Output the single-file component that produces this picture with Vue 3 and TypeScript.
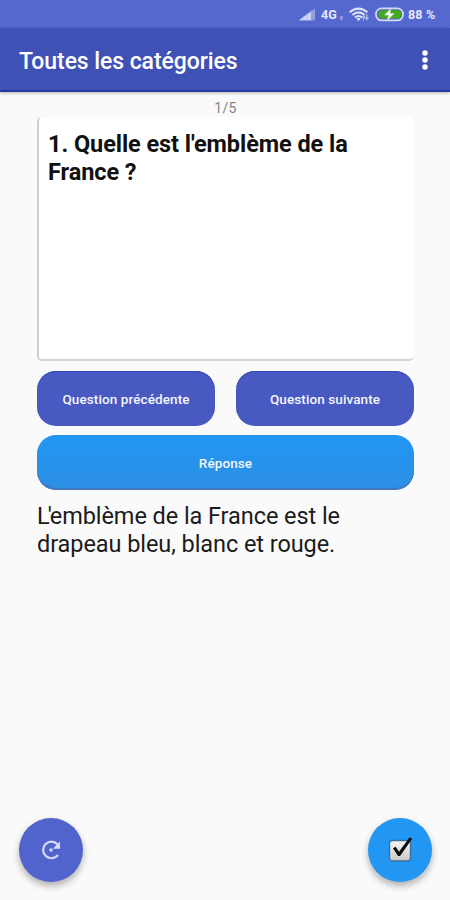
<script setup lang="ts">
import { ref } from 'vue'

interface Card {
  question: string
  answer: string
}

const total = 5
const index = ref<number>(0)
const showAnswer = ref<boolean>(true)
const cards: Card[] = [
  {
    question: "Quelle est l'emblème de la France ?",
    answer: "L'emblème de la France est le drapeau bleu, blanc et rouge.",
  },
]

function step(delta: number): void {
  index.value = Math.min(cards.length - 1, Math.max(0, index.value + delta))
}
</script>

<template>
  <div class="screen">
    <div class="status">
      <svg class="signal" width="17" height="13" viewBox="0 0 17 13">
        <path d="M0 12.2 16 .6V12.2Z" fill="#929fe2" />
        <path d="M0 12.2 12 3.5V12.2Z" fill="#d3d8f5" />
        <path d="M4.4 7.5V13M8.2 5V13M12 2V13" stroke="#a3aee6" stroke-width=".6" />
      </svg>
      <span class="net">4G</span>
      <span class="dot"></span>
      <svg class="wifi" width="21" height="15" viewBox="0 0 21 15">
        <g fill="none" stroke="#dfe3fa" stroke-width="2">
          <path d="M.6 5.200Q9.500-2 18.400 5.200" />
          <path d="M3.400 8Q9.500 2.800 15.600 8" />
          <path d="M6 10.600Q9.500 7.300 13 10.600" />
        </g>
        <path d="M7.300 11.600Q9.500 9.800 11.700 11.600L9.500 14.200Z" fill="#dfe3fa" />
        <path d="M14.500 13.500V9M13 10.500 14.500 8.700 16 10.500M17.800 7V12M16.300 10.500 17.800 12.300 19.300 10.500" fill="none" stroke="#b3bdec" stroke-width="1.200" />
      </svg>
      <svg class="battery" width="29" height="15" viewBox="0 0 29 15">
        <rect x="1" y="1.400" width="27" height="12" rx="5.500" fill="#5968bb" stroke="#d4daf4" stroke-width="1.700" />
        <path d="M7 3.300H23.500Q26 3.300 26 7.400T23.500 11.500H7Q3.500 11.500 3.500 7.400T7 3.300Z" fill="#43a91e" />
        <path d="M15.800 1.700 9.600 8H13.500L12.500 13.300 19 6.500H15Z" fill="#fff" stroke="#c4e6ce" stroke-width=".6" />
      </svg>
      <span class="pct">88 %</span>
    </div>

    <header class="bar">
      <h1>Toutes les catégories</h1>
      <svg class="more" width="8" height="22" viewBox="0 0 8 22">
        <circle cx="4" cy="4" r="2.700" />
        <circle cx="4" cy="11" r="2.700" />
        <circle cx="4" cy="18" r="2.700" />
      </svg>
    </header>

    <main>
      <div class="counter">{{ index + 1 }}/{{ total }}</div>
      <section class="card">{{ index + 1 }}. {{ cards[index].question }}</section>
      <div class="nav">
        <button class="btn" @click="step(-1)">Question précédente</button>
        <button class="btn next" @click="step(1)">Question suivante</button>
      </div>
      <button class="btn reveal" @click="showAnswer = !showAnswer">Réponse</button>
      <p v-if="showAnswer" class="answer">{{ cards[index].answer }}</p>
    </main>

    <footer>
      <button class="fab" aria-label="Recommencer">
        <svg width="22" height="22" viewBox="0 0 22 22">
          <path d="M17.600 5.400A8.300 8.300 0 1 0 18 16" fill="none" stroke="#d2d9fa" stroke-width="2.200" />
          <path d="M20 2.500V9.700H12.800Z" fill="#d2d9fa" />
          <circle cx="11" cy="11" r="1.700" fill="#d2d9fa" />
        </svg>
      </button>
      <button class="fab valid" aria-label="Valider">
        <svg width="26" height="28" viewBox="0 0 26 28">
          <defs>
            <linearGradient id="box" x1="0" y1="0" x2="0" y2="1">
              <stop offset="0" stop-color="#f5f5f5" />
              <stop offset="1" stop-color="#c6c7c8" />
            </linearGradient>
          </defs>
          <rect x="2.500" y="4.500" width="21" height="20.500" rx="3" fill="url(#box)" stroke="#3d6f9b" stroke-width="1.300" />
          <path d="M6 12.200 8.600 10.700 12 15.800 22.500 1.500 25.200 2.800 13 20H11Z" fill="#0b0b0b" />
        </svg>
      </button>
    </footer>
  </div>
</template>

<style>
body {
  margin: 0;
}
</style>

<style scoped>
.screen {
  width: 450px;
  height: 900px;
  display: flex;
  flex-direction: column;
  background: #fafafa;
  font-family: Roboto, 'Liberation Sans', sans-serif;
  overflow: hidden;
}
.status {
  height: 28px;
  box-sizing: border-box;
  padding: 1px 0 0 299px;
  display: flex;
  align-items: center;
  flex: none;
  background: #5468cf;
  color: #e4e8fc;
}
.net {
  margin-left: 5px;
  width: 17px;
  font-size: 12.5px;
  font-weight: 700;
}
.dot {
  width: 3px;
  height: 4px;
  margin: 6px 6px 0 2px;
  background: #8b98df;
}
.battery {
  margin-left: 5px;
}
.pct {
  margin-left: 4px;
  font-size: 12.5px;
  font-weight: 700;
  letter-spacing: 0.2px;
  white-space: nowrap;
}
.bar {
  height: 64px;
  box-sizing: border-box;
  flex: none;
  padding: 2px 21px 0 19px;
  display: flex;
  align-items: center;
  justify-content: space-between;
  background: #3f51b5;
  border-bottom: 2px solid #2438a5;
  box-shadow: 0 1px 3px rgba(0, 0, 0, 0.3);
}
h1 {
  margin: 2px 0 0;
  color: #fff;
  font-size: 23px;
  font-weight: 500;
  letter-spacing: -0.08px;
}
.more {
  fill: #fff;
}
main {
  flex: 1;
  padding: 0 36px 0 37px;
}
.counter {
  height: 25px;
  padding-top: 8px;
  box-sizing: border-box;
  text-align: center;
  font-size: 14px;
  line-height: 16px;
  letter-spacing: 0.3px;
  color: #858585;
}
.card {
  height: 244px;
  box-sizing: border-box;
  padding: 14px 50px 0 9px;
  background: #fff;
  border-left: 2px solid #cfcfcf;
  border-bottom: 2px solid #d3d3d3;
  border-radius: 5px;
  color: #111;
  font-size: 23.5px;
  font-weight: 700;
  line-height: 27.5px;
  letter-spacing: -0.07px;
}
.nav {
  display: flex;
  gap: 21px;
  margin-top: 10px;
}
.btn {
  flex: 1;
  height: 55px;
  padding: 0;
  border: 0;
  border-radius: 19px;
  background: #4859c1;
  box-shadow: inset 0 1px 1px #3549b6;
  color: #f4f5ff;
  font: 500 13.5px Roboto, 'Liberation Sans', sans-serif;
  letter-spacing: 0.1px;
}
.reveal {
  display: block;
  width: 100%;
  margin-top: 9px;
  background: linear-gradient(#2196f3, #2c8fe4);
  box-shadow: inset 0 -2px 1px #4377bd;
}
.answer {
  margin: 13px 0 0;
  width: 330px;
  color: #1b1b1b;
  font-size: 23.5px;
  line-height: 27.5px;
  letter-spacing: -0.07px;
}
.answer::first-letter {
  letter-spacing: -2px;
}
footer {
  display: flex;
  justify-content: space-between;
  padding: 0 18px 18px 19px;
}
.fab {
  width: 64px;
  height: 64px;
  padding: 0;
  border: 0;
  border-radius: 50%;
  display: flex;
  align-items: center;
  justify-content: center;
  background: #5164ce;
  box-shadow: 0 4px 7px rgba(0, 0, 0, 0.3);
}
.valid {
  background: #2196f3;
}
</style>
